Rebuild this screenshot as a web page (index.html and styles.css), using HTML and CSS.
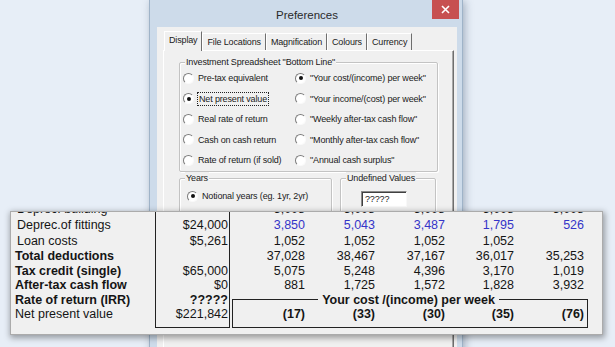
FILE: index.html
```html
<!DOCTYPE html>
<html lang="en">
<head>
    <meta charset="UTF-8">
    <title>Preferences</title>
    <link rel="stylesheet" href="styles.css">
</head>
<body>
<div class="desktop">
    <div class="dialog">
        <div class="titlebar">
            <span class="title">Preferences</span>
            <span class="close">
                <svg width="9" height="9" viewBox="0 0 9 9"><path d="M1 1 L8 8 M8 1 L1 8" stroke="#fff" stroke-width="1.6"/></svg>
            </span>
        </div>
        <div class="client">
            <div class="tabs">
                <span class="tab active">Display</span>
                <span class="tab">File Locations</span>
                <span class="tab">Magnification</span>
                <span class="tab">Colours</span>
                <span class="tab">Currency</span>
            </div>
            <div class="tab-page">
                <div class="group bottom-line">
                    <span class="legend">Investment Spreadsheet "Bottom Line"</span>
                    <div class="radio-grid">
                        <label class="radio"><span class="circle"></span>Pre-tax equivalent</label>
                        <label class="radio"><span class="circle checked"></span>"Your cost/(income) per week"</label>
                        <label class="radio"><span class="circle checked"></span><span class="focus">Net present value</span></label>
                        <label class="radio"><span class="circle"></span>"Your income/(cost) per week"</label>
                        <label class="radio"><span class="circle"></span>Real rate of return</label>
                        <label class="radio"><span class="circle"></span>"Weekly after-tax cash flow"</label>
                        <label class="radio"><span class="circle"></span>Cash on cash return</label>
                        <label class="radio"><span class="circle"></span>"Monthly after-tax cash flow"</label>
                        <label class="radio"><span class="circle"></span>Rate of return (if sold)</label>
                        <label class="radio"><span class="circle"></span>"Annual cash surplus"</label>
                    </div>
                </div>
                <div class="lower">
                    <div class="group years">
                        <span class="legend">Years</span>
                        <label class="radio"><span class="circle checked"></span>Notional years (eg. 1yr, 2yr)</label>
                        <label class="radio"><span class="circle"></span>Actual years (eg. 2004, 2005)</label>
                    </div>
                    <div class="group undefined">
                        <span class="legend">Undefined Values</span>
                        <div class="textbox">?????</div>
                    </div>
                </div>
            </div>
        </div>
    </div>

    <div class="sheet-panel">
        <div class="sheet">
            <div class="labels">
                <div class="row tall indent">Deprec. building</div>
                <div class="row tall indent">Deprec.of fittings</div>
                <div class="row tall indent">Loan costs</div>
                <div class="row bold">Total deductions</div>
                <div class="row bold">Tax credit (single)</div>
                <div class="row bold">After-tax cash flow</div>
                <div class="row bold">Rate of return (IRR)</div>
                <div class="row">Net present value</div>
            </div>
            <div class="col-one">
                <div class="row tall"></div>
                <div class="row tall">$24,000</div>
                <div class="row tall">$5,261</div>
                <div class="row"></div>
                <div class="row">$65,000</div>
                <div class="row">$0</div>
                <div class="row bold">?????</div>
                <div class="row">$221,842</div>
            </div>
            <div class="years-block">
                <div class="vals tall"><span>5,008</span><span>5,008</span><span>5,008</span><span>5,008</span><span>5,008</span></div>
                <div class="vals tall blue"><span>3,850</span><span>5,043</span><span>3,487</span><span>1,795</span><span>526</span></div>
                <div class="vals tall"><span>1,052</span><span>1,052</span><span>1,052</span><span>1,052</span><span></span></div>
                <div class="vals"><span>37,028</span><span>38,467</span><span>37,167</span><span>36,017</span><span>35,253</span></div>
                <div class="vals"><span>5,075</span><span>5,248</span><span>4,396</span><span>3,170</span><span>1,019</span></div>
                <div class="vals"><span>881</span><span>1,725</span><span>1,572</span><span>1,828</span><span>3,932</span></div>
                <fieldset class="week">
                    <legend>Your cost /(income) per week</legend>
                    <div class="vals inner bold"><span>(17)</span><span>(33)</span><span>(30)</span><span>(35)</span><span>(76)</span></div>
                </fieldset>
            </div>
        </div>
    </div>
</div>
</body>
</html>
```

FILE: styles.css
```css
* {
    box-sizing: border-box;
}
html, body {
    margin: 0;
    padding: 0;
}
body {
    background: #e7eef7;
    font-family: "Liberation Sans", Arial, sans-serif;
    color: #111;
}
.desktop {
    position: relative;
    width: 615px;
    height: 347px;
    overflow: hidden;
}

/* Preferences dialog */
.dialog {
    position: absolute;
    left: 149px;
    top: -1px;
    width: 314px;
    height: 420px;
    background: #cddbea;
    border: 1px solid #9fb3c8;
    padding: 0 5px 0 7px;
    box-shadow: 2px 2px 8px rgba(40, 60, 90, 0.35);
}
.titlebar {
    height: 27px;
    padding-top: 3px;
    display: flex;
    align-items: center;
    justify-content: center;
}
.title {
    font-size: 11.5px;
    color: #2a2a2a;
}
.close {
    position: absolute;
    top: 0;
    right: 3px;
    width: 27px;
    height: 19px;
    background: #c75050;
    display: flex;
    align-items: center;
    justify-content: center;
}
.client {
    background: #f0f0f0;
    height: 400px;
    font-size: 9px;
    letter-spacing: -0.15px;
    color: #1a1a1a;
}
.tabs {
    display: flex;
    align-items: flex-end;
    height: 23px;
    padding: 4px 0 0 7px;
}
.tab {
    height: 17px;
    line-height: 16px;
    padding: 0 4px;
    border-top: 1px solid #fff;
    border-left: 1px solid #fff;
    border-right: 1px solid #6e6e6e;
    white-space: nowrap;
}
.tab.active {
    height: 20px;
    margin-bottom: -1px;
    position: relative;
    background: #f0f0f0;
    line-height: 17px;
}
.tab-page {
    margin: 0 3px 0 6px;
    height: 300px;
    border: 1px solid;
    border-color: #fff #6e6e6e #6e6e6e #fff;
    box-shadow: inset -1px -1px #a8a8a8;
    padding: 11px 15px 0 15px;
}
.group {
    position: relative;
    border: 1px solid #c3c3c3;
    border-radius: 2px;
    box-shadow: 1px 1px 0 #fff, inset 1px 1px 0 #fff;
}
.legend {
    position: absolute;
    top: -7px;
    left: 5px;
    padding: 0 1px;
    line-height: 12px;
    background: #f0f0f0;
    white-space: nowrap;
}
.bottom-line {
    height: 110px;
}
.radio-grid {
    display: grid;
    grid-template-columns: 112px 1fr;
    grid-auto-rows: 20.5px;
    padding: 5px 0 0 3px;
}
.radio {
    display: flex;
    align-items: center;
    gap: 4px;
    white-space: nowrap;
}
.circle {
    position: relative;
    width: 11px;
    height: 11px;
    flex-shrink: 0;
    border-radius: 50%;
    border: 1px solid;
    border-color: #7c7c7c #fafafa #fafafa #7c7c7c;
    background: #fff;
}
.circle.checked::after {
    content: "";
    position: absolute;
    left: 2.5px;
    top: 2.5px;
    width: 4px;
    height: 4px;
    border-radius: 50%;
    background: #111;
}
.focus {
    outline: 1px dotted #222;
    outline-offset: 0;
    padding: 0 1px;
    line-height: 12px;
}
.lower {
    display: flex;
    gap: 8px;
    margin-top: 6px;
}
.years {
    width: 153px;
    height: 60px;
    padding: 7px 0 0 7px;
}
.years .radio {
    height: 20.5px;
}
.undefined {
    width: 96px;
    height: 60px;
}
.textbox {
    margin: 12px 0 0 20px;
    width: 46px;
    height: 16px;
    background: #fff;
    border: 1px solid;
    border-color: #8a8a8a #f8f8f8 #f8f8f8 #8a8a8a;
    box-shadow: inset 1px 1px 0 #404040;
    padding-left: 3px;
    line-height: 14px;
}

/* Spreadsheet panel */
.sheet-panel {
    position: absolute;
    left: 10px;
    top: 211px;
    width: 593px;
    height: 124px;
    background: #f0f0f0;
    border: 1px solid #ababab;
    box-shadow: 1px 2px 6px 1px rgba(0, 0, 0, 0.35);
    overflow: hidden;
    font-size: 12.5px;
    color: #151515;
}
.sheet {
    display: flex;
    margin-top: -11px;
}
.row, .vals {
    height: 14.5px;
    line-height: 14.5px;
    white-space: nowrap;
}
.tall {
    height: 16px;
    line-height: 16px;
}
.bold {
    font-weight: bold;
}
.blue {
    color: #3535c8;
}
.labels {
    width: 144px;
    padding-left: 4px;
}
.labels .indent {
    padding-left: 2px;
}
.col-one {
    width: 75px;
    border: 1px solid #222;
    border-top: none;
    padding: 0 1px 5px 0;
    text-align: right;
}
.years-block {
    width: 358px;
}
.vals {
    display: grid;
    grid-template-columns: 75px 70px 70px 69px 70px;
    text-align: right;
}
.week {
    margin: 0 0 0 2px;
    padding: 0 3px 5px 0;
    width: 356px;
    min-width: 0;
    border: 1px solid #222;
}
.week legend {
    margin: 0 auto;
    padding: 0 4px;
    line-height: 14.5px;
    font-weight: bold;
}
.vals.inner {
    grid-template-columns: 72px 70px 70px 69px 70px;
}
```
